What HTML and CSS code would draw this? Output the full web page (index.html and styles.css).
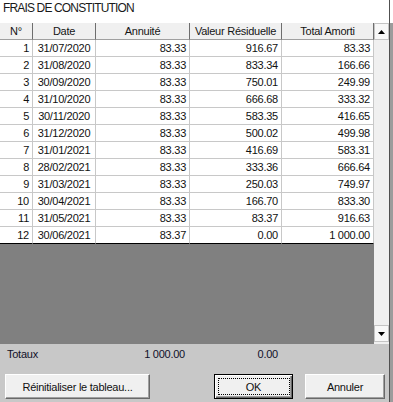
FILE: index.html
```html
<!DOCTYPE html>
<html lang="fr">
<head>
<meta charset="utf-8">
<title>Frais de constitution</title>
<link rel="stylesheet" href="styles.css">
</head>
<body>
<div class="screen">
  <div class="dialog">
    <div class="title">FRAIS DE CONSTITUTION</div>
    <div class="main">
      <div class="table">
        <div class="row head">
          <div class="c">N°</div><div class="c">Date</div><div class="c">Annuité</div><div class="c">Valeur Résiduelle</div><div class="c">Total Amorti</div>
        </div>
        <div class="row"><div class="c">1</div><div class="c date">31/07/2020</div><div class="c">83.33</div><div class="c">916.67</div><div class="c">83.33</div></div>
        <div class="row"><div class="c">2</div><div class="c date">31/08/2020</div><div class="c">83.33</div><div class="c">833.34</div><div class="c">166.66</div></div>
        <div class="row"><div class="c">3</div><div class="c date">30/09/2020</div><div class="c">83.33</div><div class="c">750.01</div><div class="c">249.99</div></div>
        <div class="row"><div class="c">4</div><div class="c date">31/10/2020</div><div class="c">83.33</div><div class="c">666.68</div><div class="c">333.32</div></div>
        <div class="row"><div class="c">5</div><div class="c date">30/11/2020</div><div class="c">83.33</div><div class="c">583.35</div><div class="c">416.65</div></div>
        <div class="row"><div class="c">6</div><div class="c date">31/12/2020</div><div class="c">83.33</div><div class="c">500.02</div><div class="c">499.98</div></div>
        <div class="row"><div class="c">7</div><div class="c date">31/01/2021</div><div class="c">83.33</div><div class="c">416.69</div><div class="c">583.31</div></div>
        <div class="row"><div class="c">8</div><div class="c date">28/02/2021</div><div class="c">83.33</div><div class="c">333.36</div><div class="c">666.64</div></div>
        <div class="row"><div class="c">9</div><div class="c date">31/03/2021</div><div class="c">83.33</div><div class="c">250.03</div><div class="c">749.97</div></div>
        <div class="row"><div class="c">10</div><div class="c date">30/04/2021</div><div class="c">83.33</div><div class="c">166.70</div><div class="c">833.30</div></div>
        <div class="row"><div class="c">11</div><div class="c date">31/05/2021</div><div class="c">83.33</div><div class="c">83.37</div><div class="c">916.63</div></div>
        <div class="row last"><div class="c">12</div><div class="c date">30/06/2021</div><div class="c">83.37</div><div class="c">0.00</div><div class="c">1 000.00</div></div>
        <div class="empty"></div>
      </div>
      <div class="vscroll">
        <div class="sbtn"><svg width="7" height="4" viewBox="0 0 7 4"><polygon points="0,4 7,4 3.5,0" fill="#000"/></svg></div>
        <div class="track"></div>
        <div class="sbtn"><svg width="7" height="4" viewBox="0 0 7 4"><polygon points="0,0 7,0 3.5,4" fill="#000"/></svg></div>
      </div>
    </div>
    <div class="totals">
      <div class="t-label">Totaux</div>
      <div class="t-num a">1 000.00</div>
      <div class="t-num v">0.00</div>
    </div>
    <div class="buttons">
      <div class="btn reset">Réinitialiser le tableau...</div>
      <div class="btn-group">
        <div class="btn ok">OK</div>
        <div class="btn cancel">Annuler</div>
      </div>
    </div>
  </div>
  <div class="backdrop"></div>
</div>
</body>
</html>
```
FILE: styles.css
```css
html, body {
  margin: 0;
  padding: 0;
  width: 393px;
  height: 402px;
  overflow: hidden;
  background: #fff;
}
body {
  font-family: "Liberation Sans", Arial, sans-serif;
  font-size: 11px;
  color: #111;
  letter-spacing: -0.25px;
}
.screen {
  display: grid;
  grid-template-columns: 389px 4px;
  height: 402px;
}
.dialog {
  display: flex;
  flex-direction: column;
  background: #c8c8c8;
  height: 402px;
}
.title {
  height: 23px;
  box-sizing: border-box;
  background: #fff;
  padding: 1px 0 0 3px;
  font-size: 12px;
  line-height: 15px;
  letter-spacing: -0.85px;
  color: #1a1a1a;
}
.main {
  display: flex;
  height: 321px;
}
.table {
  width: 374px;
  display: flex;
  flex-direction: column;
  background: #808080;
}
.row {
  display: grid;
  grid-template-columns: 33px 63px 94px 92px 92px;
  height: 17px;
  background: #fff;
  flex: none;
}
.row .c {
  box-sizing: border-box;
  border-right: 1px solid #c8c8c8;
  border-bottom: 1px solid #c8c8c8;
  line-height: 16px;
  padding-right: 3px;
  text-align: right;
  white-space: nowrap;
  overflow: hidden;
}
.row .c.date {
  text-align: center;
  padding: 0;
}
.row.head {
  background: #f0f0f0;
}
.row.head .c {
  text-align: center;
  padding: 0;
  border-right-color: #6e6e6e;
  border-bottom-color: #a0a0a0;
  color: #151515;
}
.row.last .c {
  border-bottom-color: #000;
}
.empty {
  flex: 1;
  background: #808080;
}
.vscroll {
  width: 15px;
  display: flex;
  flex-direction: column;
  background: #f0f0f0;
  padding-bottom: 2px;
  box-sizing: border-box;
}
.track {
  flex: 1;
}
.sbtn {
  height: 17px;
  box-sizing: border-box;
  background: #f8f8f8;
  border: 1px solid #c4c4c4;
  display: flex;
  align-items: center;
  justify-content: center;
}
.totals {
  display: grid;
  grid-template-columns: 96px 94px 92px;
  height: 20px;
  line-height: 20px;
  color: #101028;
}
.t-label {
  padding-left: 7px;
}
.t-num {
  text-align: right;
}
.t-num.a {
  padding-right: 5px;
}
.t-num.v {
  padding-right: 4px;
}
.buttons {
  display: flex;
  align-items: flex-start;
  padding: 10px 4px 0 5px;
}
.btn-group {
  display: flex;
  gap: 12px;
  margin-left: auto;
}
.btn {
  position: relative;
  height: 25px;
  box-sizing: border-box;
  background: #f0f0f0;
  border: 1px solid;
  border-color: #fff #696969 #696969 #fff;
  box-shadow: inset -1px -1px #a0a0a0;
  display: flex;
  align-items: center;
  justify-content: center;
  color: #111;
}
.btn.reset {
  width: 145px;
}
.btn.cancel {
  width: 80px;
}
.btn.ok {
  width: 79px;
  border-color: #000;
  box-shadow: inset 1px 1px #fff, inset -1px -1px #696969, inset -2px -2px #a0a0a0;
}
.btn.ok::after {
  content: "";
  position: absolute;
  top: 3px;
  left: 3px;
  right: 2px;
  bottom: 3px;
  border: 1px dotted #000;
}
.backdrop {
  background: linear-gradient(#fff 0 23px, #9c9c9c 23px);
  border-left: 1px solid #505050;
  box-sizing: border-box;
}
```
